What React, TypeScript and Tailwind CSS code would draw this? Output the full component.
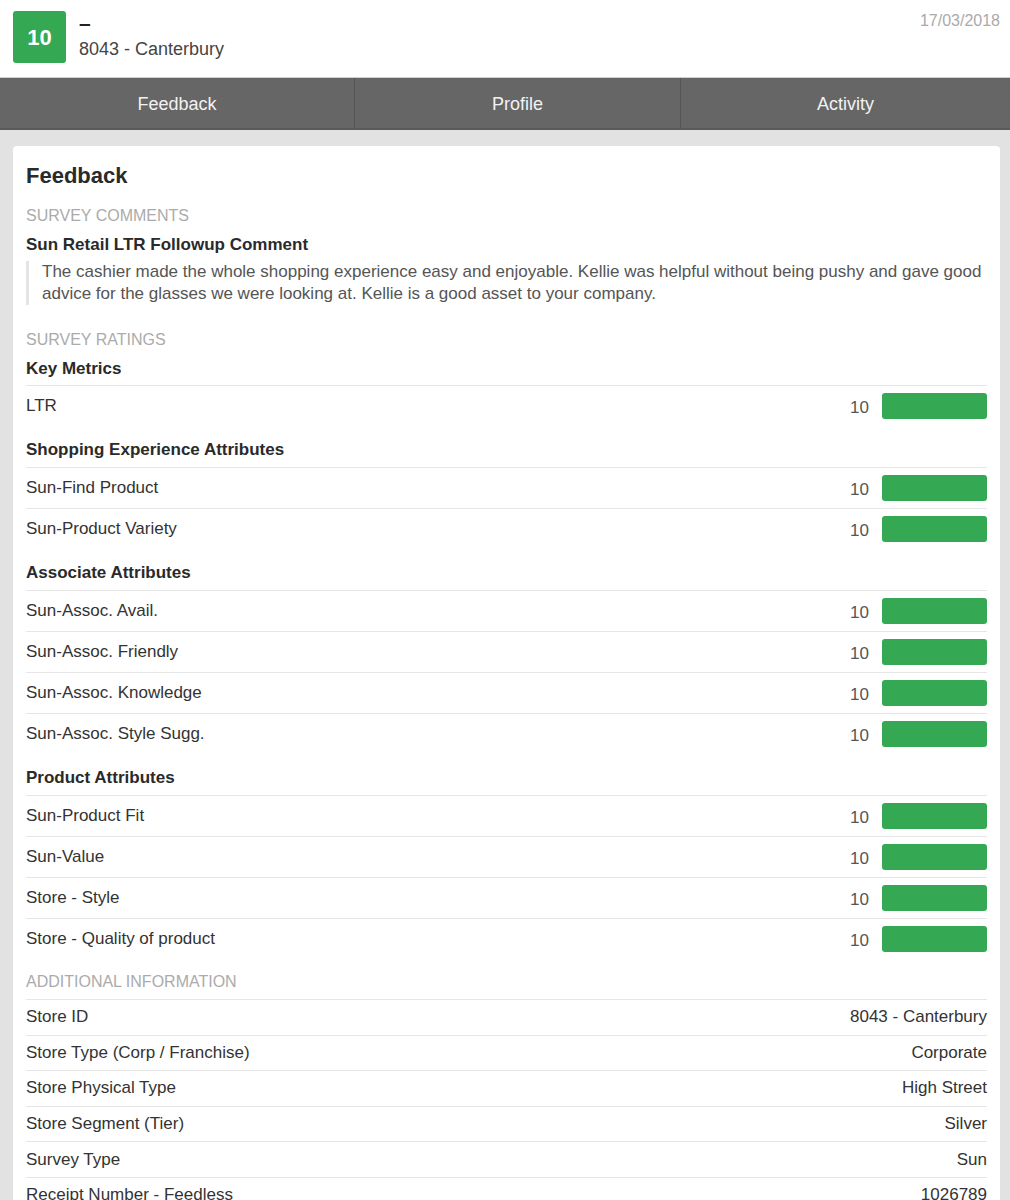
import React from "react";

const sections = [
  { title: "Key Metrics", items: ["LTR"] },
  { title: "Shopping Experience Attributes", items: ["Sun-Find Product", "Sun-Product Variety"] },
  {
    title: "Associate Attributes",
    items: ["Sun-Assoc. Avail.", "Sun-Assoc. Friendly", "Sun-Assoc. Knowledge", "Sun-Assoc. Style Sugg."],
  },
  {
    title: "Product Attributes",
    items: ["Sun-Product Fit", "Sun-Value", "Store - Style", "Store - Quality of product"],
  },
];

const info: [string, string][] = [
  ["Store ID", "8043 - Canterbury"],
  ["Store Type (Corp / Franchise)", "Corporate"],
  ["Store Physical Type", "High Street"],
  ["Store Segment (Tier)", "Silver"],
  ["Survey Type", "Sun"],
  ["Receipt Number - Feedless", "1026789"],
];

function RatingRow({ label }: { label: string }) {
  return (
    <div className="flex h-[41px] items-center border-t border-[#e6e6e6]">
      <div className="flex-1 text-[17px] leading-[20px] text-[#333]">{label}</div>
      <div className="mt-[3px] mr-[13px] text-[17px] leading-[20px] text-[#555]">10</div>
      <div className="h-[26px] w-[105px] rounded-[3px] bg-[#34a853]" />
    </div>
  );
}

export default function App() {
  return (
    <div
      className="min-h-[1200px] bg-[#e2e2e2]"
      style={{ fontFamily: '"Liberation Sans", Arial, sans-serif' }}
    >
      {/* Header */}
      <div className="flex h-[77px] bg-white pl-[13px] pr-[10px] pt-[11px]">
        <div className="flex h-[52px] w-[53px] items-center justify-center rounded-[3px] bg-[#35a853] text-[22px] font-bold text-white">
          10
        </div>
        <div className="ml-[13px] flex-1">
          <div className="h-[24px] text-[21px] font-bold leading-[24px] text-[#222]">–</div>
          <div className="mt-[3px] text-[18px] leading-[22px] text-[#444]">8043 - Canterbury</div>
        </div>
        <div className="pt-[1px] text-[16px] leading-[18px] text-[#aaa]">17/03/2018</div>
      </div>

      {/* Nav */}
      <div className="flex h-[53px] border-t border-[#cfcfcf] border-b-2 border-b-[#5a5a5a] bg-[#666666]">
        <div className="flex w-[355px] items-center justify-center border-r border-[#555] pt-[2px] text-[18px] text-[#f2f2f2]">
          Feedback
        </div>
        <div className="flex w-[326px] items-center justify-center border-r border-[#555] pt-[2px] text-[18px] text-[#f2f2f2]">
          Profile
        </div>
        <div className="flex flex-1 items-center justify-center pt-[2px] text-[18px] text-[#f2f2f2]">Activity</div>
      </div>

      {/* Card */}
      <div className="ml-[13px] mr-[10px] mt-[16px] rounded-t-[4px] bg-white px-[13px] pt-[16px] pb-[20px]">
        <div className="text-[22px] font-bold leading-[28px] text-[#2a2a2a]">Feedback</div>

        <div className="mt-[16px] text-[16px] leading-[20px] text-[#ababab]">SURVEY COMMENTS</div>
        <div className="mt-[9px] text-[17px] font-bold leading-[20px] text-[#2a2a2a]">
          Sun Retail LTR Followup Comment
        </div>
        <div className="mt-[6px] border-l-[3px] border-[#e4e4e4] pl-[13px] text-[17px] leading-[22px] text-[#555]">
          The cashier made the whole shopping experience easy and enjoyable. Kellie was helpful without being pushy and gave good
          advice for the glasses we were looking at. Kellie is a good asset to your company.
        </div>

        <div className="mt-[25px] text-[16px] leading-[20px] text-[#ababab]">SURVEY RATINGS</div>

        {sections.map((s, i) => (
          <div key={s.title}>
            <div
              className={
                i === 0
                  ? "mt-[9px] pb-[6px] text-[17px] font-bold leading-[20px] text-[#2a2a2a]"
                  : "pt-[14px] pb-[7px] text-[17px] font-bold leading-[20px] text-[#2a2a2a]"
              }
            >
              {s.title}
            </div>
            {s.items.map((it) => (
              <RatingRow key={it} label={it} />
            ))}
          </div>
        ))}

        <div className="mt-[13px] pb-[7px] text-[16px] leading-[20px] text-[#ababab]">ADDITIONAL INFORMATION</div>
        {info.map(([k, v]) => (
          <div key={k} className="flex h-[35.6px] items-center border-t border-[#e6e6e6] text-[17px] leading-[20px] text-[#333]">
            <div className="flex-1">{k}</div>
            <div>{v}</div>
          </div>
        ))}
      </div>
    </div>
  );
}
